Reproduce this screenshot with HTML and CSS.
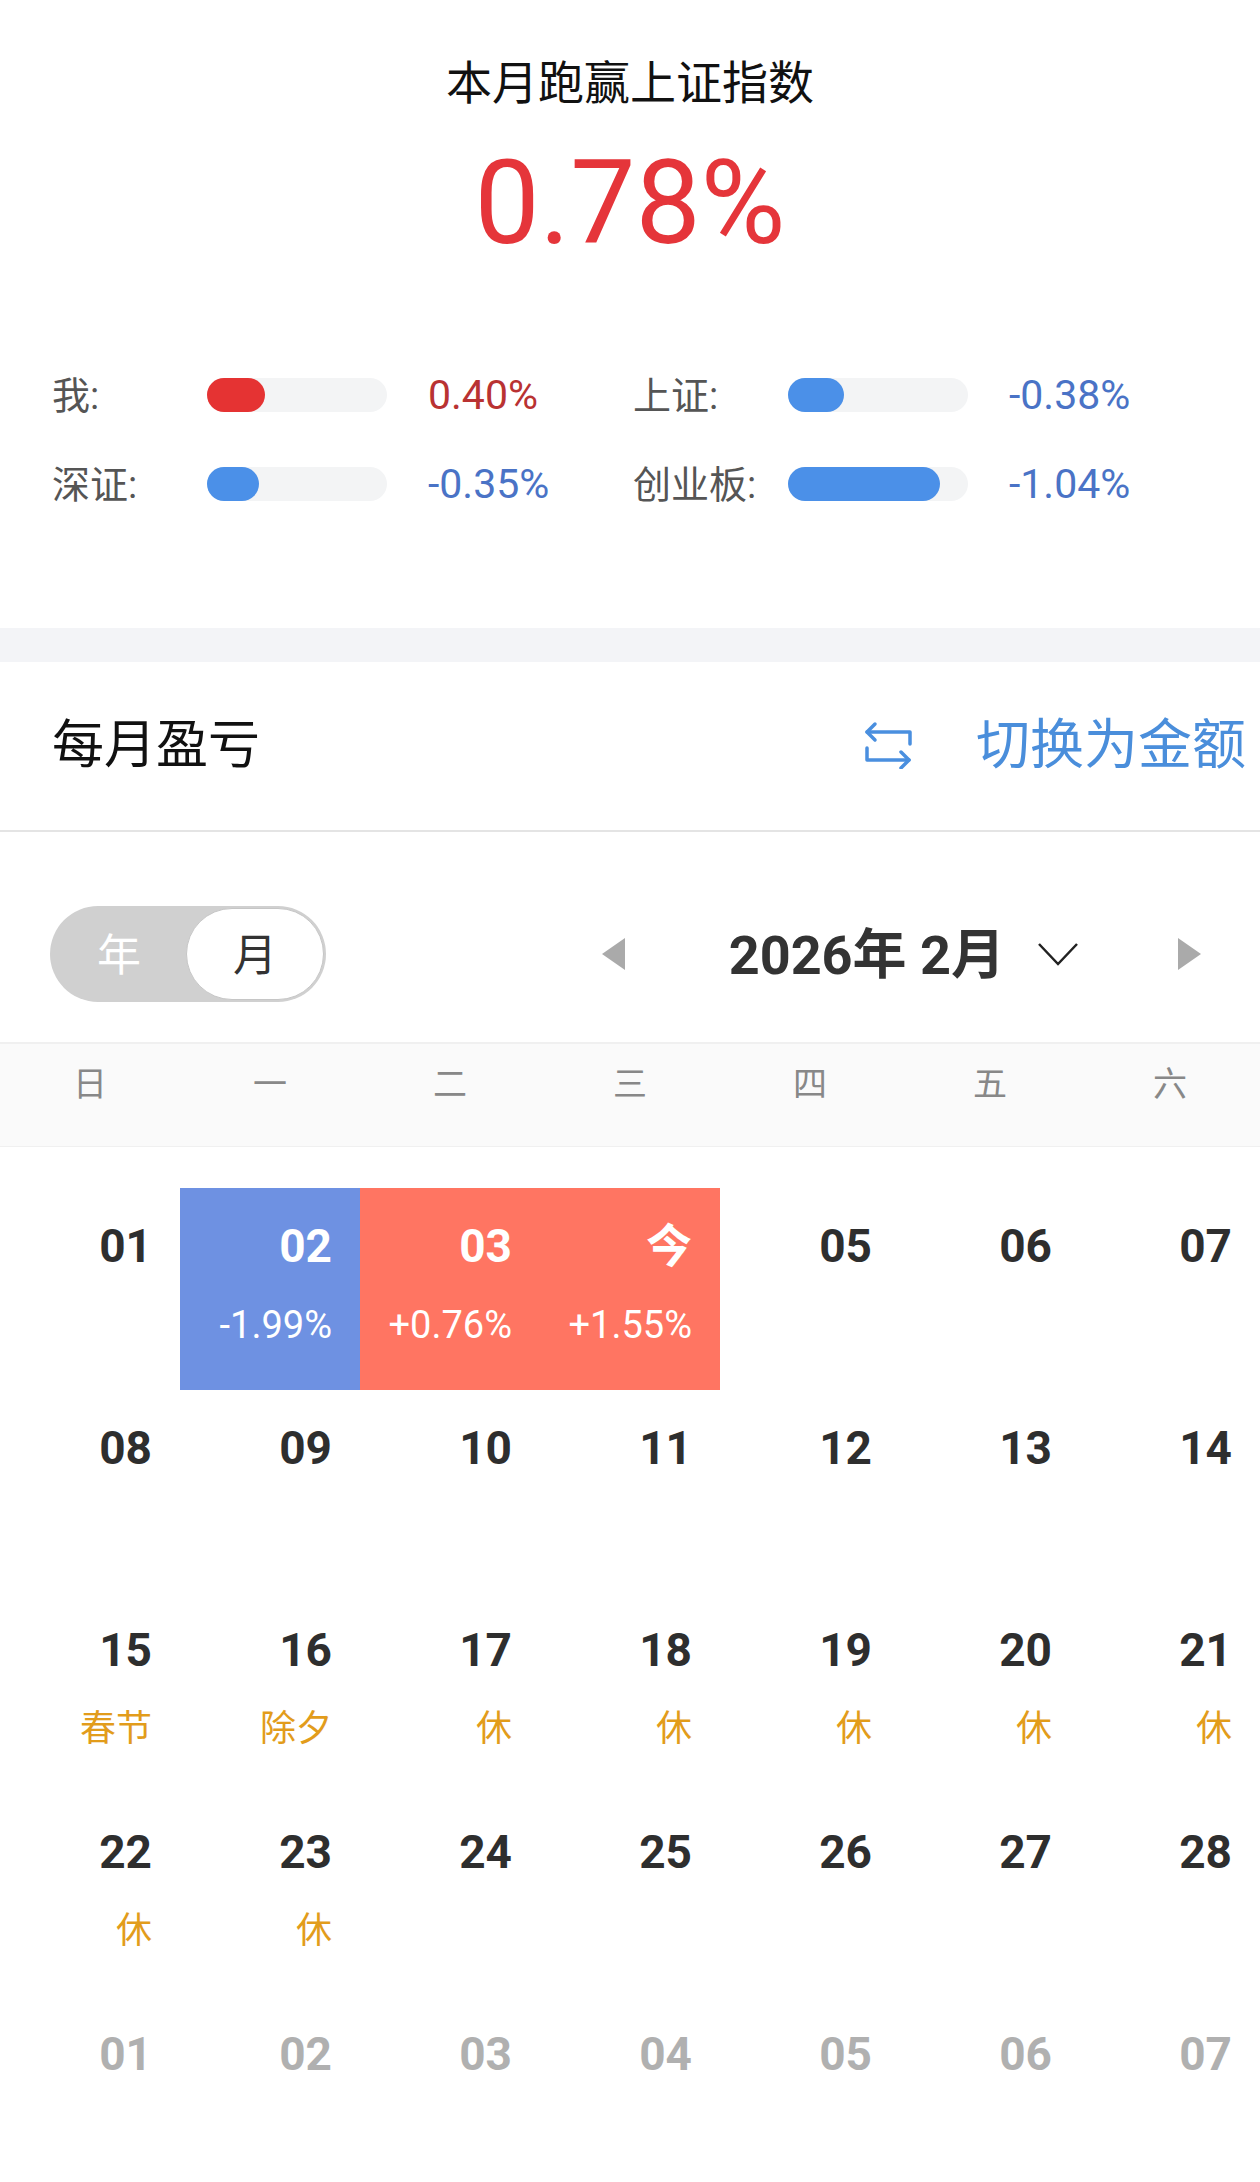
FILE: index.html
```html
<!DOCTYPE html>
<html>

<head>
    <meta charset="utf-8">
    <link rel="stylesheet" href="styles.css">
</head>

<body>
    <div class="summary">
        <div class="summary-title">本月跑赢上证指数</div>
        <div class="summary-value">0.78%</div>
        <div class="compare">
            <div class="compare-item">
                <span class="compare-label">我:</span>
                <span class="track"><span class="fill fill-up" style="width: 58px"></span></span>
                <span class="compare-value up">0.40%</span>
            </div>
            <div class="compare-item">
                <span class="compare-label">上证:</span>
                <span class="track"><span class="fill fill-down" style="width: 56px"></span></span>
                <span class="compare-value down">-0.38%</span>
            </div>
            <div class="compare-item">
                <span class="compare-label">深证:</span>
                <span class="track"><span class="fill fill-down" style="width: 52px"></span></span>
                <span class="compare-value down">-0.35%</span>
            </div>
            <div class="compare-item">
                <span class="compare-label">创业板:</span>
                <span class="track"><span class="fill fill-down" style="width: 152px"></span></span>
                <span class="compare-value down">-1.04%</span>
            </div>
        </div>
    </div>

    <div class="band"></div>

    <div class="section-head">
        <div class="section-title">每月盈亏</div>
        <div class="switch">
            <svg class="switch-icon" width="48" height="48" viewBox="0 0 48 48" fill="none" stroke="#4a8fdf"
                stroke-width="3.5" stroke-linecap="round" stroke-linejoin="round">
                <path d="M3 11 H46 V23" />
                <path d="M11 3 L3 11 L11 19" />
                <path d="M3 27 V39 H45" />
                <path d="M37 31 L45 39 L37 47" />
            </svg>
            <span class="switch-text">切换为金额</span>
        </div>
    </div>

    <div class="cal-controls">
        <div class="toggle">
            <span class="toggle-opt">年</span>
            <span class="toggle-opt on">月</span>
        </div>
        <div class="month-nav">
            <span class="tri tri-left"></span>
            <span class="month-label">2026年 2月</span>
            <svg class="chevron" width="42" height="24" viewBox="0 0 42 24" fill="none" stroke="#222"
                stroke-width="2.5">
                <path d="M2 2 L21 22 L40 2" />
            </svg>
            <span class="tri tri-right"></span>
        </div>
    </div>

    <div class="weekdays">
        <span>日</span><span>一</span><span>二</span><span>三</span><span>四</span><span>五</span><span>六</span>
    </div>

    <div class="cal-grid">
        <div class="day"><div class="num">01</div></div>
        <div class="day loss"><div class="num">02</div><div class="sub">-1.99%</div></div>
        <div class="day gain"><div class="num">03</div><div class="sub">+0.76%</div></div>
        <div class="day gain"><div class="num">今</div><div class="sub">+1.55%</div></div>
        <div class="day"><div class="num">05</div></div>
        <div class="day"><div class="num">06</div></div>
        <div class="day"><div class="num">07</div></div>

        <div class="day"><div class="num">08</div></div>
        <div class="day"><div class="num">09</div></div>
        <div class="day"><div class="num">10</div></div>
        <div class="day"><div class="num">11</div></div>
        <div class="day"><div class="num">12</div></div>
        <div class="day"><div class="num">13</div></div>
        <div class="day"><div class="num">14</div></div>

        <div class="day"><div class="num">15</div><div class="sub holiday">春节</div></div>
        <div class="day"><div class="num">16</div><div class="sub holiday">除夕</div></div>
        <div class="day"><div class="num">17</div><div class="sub holiday">休</div></div>
        <div class="day"><div class="num">18</div><div class="sub holiday">休</div></div>
        <div class="day"><div class="num">19</div><div class="sub holiday">休</div></div>
        <div class="day"><div class="num">20</div><div class="sub holiday">休</div></div>
        <div class="day"><div class="num">21</div><div class="sub holiday">休</div></div>

        <div class="day"><div class="num">22</div><div class="sub holiday">休</div></div>
        <div class="day"><div class="num">23</div><div class="sub holiday">休</div></div>
        <div class="day"><div class="num">24</div></div>
        <div class="day"><div class="num">25</div></div>
        <div class="day"><div class="num">26</div></div>
        <div class="day"><div class="num">27</div></div>
        <div class="day"><div class="num">28</div></div>

        <div class="day other"><div class="num">01</div></div>
        <div class="day other"><div class="num">02</div></div>
        <div class="day other"><div class="num">03</div></div>
        <div class="day other"><div class="num">04</div></div>
        <div class="day other"><div class="num">05</div></div>
        <div class="day other"><div class="num">06</div></div>
        <div class="day other"><div class="num">07</div></div>
    </div>
</body>

</html>
```

FILE: styles.css
```css
body {
    margin: 0;
    background: #fff;
    font-family: Roboto, "Noto Sans CJK SC", sans-serif;
    color: #333;
}

.summary {
    padding: 53px 0 114px;
    text-align: center;
}

.summary-title {
    font-size: 46px;
    line-height: 60px;
    color: #111;
}

.summary-value {
    margin-top: 25px;
    font-size: 116px;
    line-height: 130px;
    color: #e5353a;
}

.compare {
    display: grid;
    grid-template-columns: 581px 1fr;
    row-gap: 29px;
    margin-top: 97px;
    padding-left: 52px;
    text-align: left;
}

.compare-item {
    display: flex;
    align-items: center;
    height: 60px;
}

.compare-label {
    width: 155px;
    margin-top: -6px;
    font-size: 38px;
    color: #555;
}

.track {
    display: block;
    width: 180px;
    height: 34px;
    border-radius: 17px;
    background: #f3f4f5;
}

.fill {
    display: block;
    height: 100%;
    border-radius: 17px;
}

.fill-up {
    background: #e53333;
}

.fill-down {
    background: #4b90e8;
}

.compare-value {
    margin-left: 41px;
    font-size: 41px;
}

.compare-value.up {
    color: #b93232;
}

.compare-value.down {
    color: #4a73c6;
}

.band {
    height: 34px;
    background: #f3f4f7;
}

.section-head {
    display: flex;
    align-items: center;
    justify-content: space-between;
    height: 156px;
    padding: 0 14px 12px 52px;
    border-bottom: 2px solid #e4e4e4;
}

.section-title {
    font-size: 52px;
    color: #111;
}

.switch {
    display: flex;
    align-items: center;
}

.switch-icon {
    margin-top: 10px;
    margin-right: 64px;
}

.switch-text {
    font-size: 54px;
    color: #4a8edb;
}

.cal-controls {
    display: flex;
    align-items: center;
    padding: 74px 59px 40px 50px;
}

.toggle {
    display: flex;
    width: 276px;
    height: 96px;
    box-sizing: border-box;
    padding: 2px;
    border-radius: 48px;
    background: #d0d0d0;
}

.toggle-opt {
    flex: 1;
    display: flex;
    align-items: center;
    justify-content: center;
    padding-bottom: 4px;
    font-size: 44px;
    color: #fff;
}

.toggle-opt.on {
    flex: none;
    width: 136px;
    border: 1px solid #c6c6c6;
    border-radius: 46px;
    background: #fff;
    color: #333;
}

.month-nav {
    display: flex;
    align-items: center;
    margin-left: auto;
}

.tri {
    width: 0;
    height: 0;
    border-top: 16px solid transparent;
    border-bottom: 16px solid transparent;
}

.tri-left {
    border-right: 23px solid #aaa;
}

.tri-right {
    border-left: 23px solid #aaa;
}

.month-label {
    margin-left: 104px;
    margin-bottom: 8px;
    font-size: 54px;
    font-weight: bold;
    color: #333;
}

.chevron {
    margin-left: 32px;
    margin-right: 99px;
}

.weekdays {
    display: grid;
    grid-template-columns: repeat(7, 1fr);
    box-sizing: border-box;
    height: 105px;
    padding-top: 10px;
    line-height: 60px;
    border-top: 2px solid #f0f0f0;
    border-bottom: 1px solid #f0f0f0;
    background: #fafafa;
}

.weekdays span {
    text-align: center;
    font-size: 34px;
    color: #888;
}

.cal-grid {
    display: grid;
    grid-template-columns: repeat(7, 1fr);
    grid-auto-rows: 202px;
    margin-top: 41px;
}

.day {
    padding: 30px 28px 0 0;
    text-align: right;
}

.num {
    font-size: 46px;
    font-weight: bold;
    line-height: 56px;
    color: #2e2e2e;
}

.sub {
    margin-top: 29px;
    font-size: 38px;
    line-height: 44px;
}

.holiday {
    font-size: 36px;
    color: #e29c1b;
}

.loss {
    background: #6e91e2;
}

.gain {
    background: #ff7562;
}

.loss .num,
.loss .sub,
.gain .num,
.gain .sub {
    color: #fff;
}

.other .num {
    color: #b0b0b0;
}
```
